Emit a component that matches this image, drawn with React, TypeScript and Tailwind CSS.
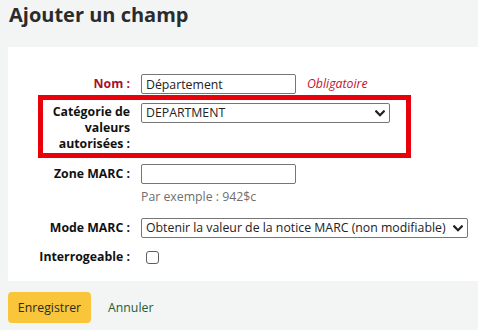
import type { ReactNode } from "react";

function Chevron() {
  return (
    <svg width="10" height="7" viewBox="0 0 10 7" className="pointer-events-none absolute right-[5px] top-[7px]">
      <path d="M1.2 1.4 L5 5.2 L8.8 1.4" fill="none" stroke="#222" strokeWidth="2.2" strokeLinecap="square" />
    </svg>
  );
}

function Row({ label, children, required }: { label: string; children: ReactNode; required?: boolean }) {
  return (
    <div className="flex items-center">
      <label
        className={`w-[122px] shrink-0 text-right font-bold ${required ? "text-[#a8112a]" : "text-[#111]"}`}
      >
        {label}
      </label>
      <div className="ml-[11px] flex items-center">{children}</div>
    </div>
  );
}

export default function App() {
  return (
    <div
      className="h-[330px] w-[478px] overflow-hidden bg-[#f3f4f4] text-[12.3px] leading-4 text-[#111]"
      style={{ fontFamily: '"Open Sans", "Noto Sans", sans-serif' }}
    >
      <h1 className="pl-[9px] pt-[2px] text-[20px] font-bold leading-[26px] text-[#2b2b2b]">Ajouter un champ</h1>

      {/* Form panel */}
      <div className="ml-[8px] mt-[19px] bg-white pb-[16px] pt-[27px]">
        <Row label="Nom :" required>
          <input
            defaultValue="Département"
            className="h-[20px] w-[155px] rounded-[2px] border border-[#767676] px-[4px] text-[12.3px] text-[#222] outline-none"
          />
          <span className="ml-[11px] italic text-[#c41230]">Obligatoire</span>
        </Row>

        {/* Highlighted row */}
        <div className="ml-[30px] mt-[1px] flex h-[63px] w-[373px] items-start border-[5px] border-[#e8000b] py-[3px]">
          <label className="w-[87px] shrink-0 pt-[1px] text-right font-bold text-[#111]">
            Catégorie de valeurs autorisées :
          </label>
          <div className="relative ml-[11px]">
            <select className="h-[20px] w-[249px] appearance-none rounded-[2px] border border-[#767676] bg-white pl-[4px] text-[12.3px] text-[#222] outline-none">
              <option>DEPARTMENT</option>
            </select>
            <Chevron />
          </div>
        </div>

        <div className="mt-[6px]">
          <Row label="Zone MARC :">
            <input className="h-[20px] w-[155px] rounded-[2px] border border-[#767676] px-[4px] text-[12.3px] outline-none" />
          </Row>
          <p className="ml-[133px] mt-[5px] text-[#6f6f6f]">Par exemple : 942$c</p>
        </div>

        <div className="mt-[13px]">
          <Row label="Mode MARC :">
            <div className="relative">
              <select className="h-[20px] w-[327px] appearance-none rounded-[2px] border border-[#767676] bg-white pl-[4px] text-[12.3px] text-[#222] outline-none">
                <option>Obtenir la valeur de la notice MARC (non modifiable)</option>
              </select>
              <Chevron />
            </div>
          </Row>
        </div>

        <div className="mt-[11px] h-[16px]">
          <Row label="Interrogeable :">
            <input
              type="checkbox"
              className="ml-[5px] h-[13px] w-[13px] appearance-none rounded-[3px] border border-[#5f5f5f] bg-white"
            />
          </Row>
        </div>
      </div>

      {/* Actions */}
      <div className="ml-[8px] mt-[11px] flex items-center">
        <button className="h-[31px] w-[83px] rounded-[4px] bg-[#f9c53b] text-[12.3px] text-[#2b2b2b]">Enregistrer</button>
        <a className="ml-[17px] text-[#245c34]">Annuler</a>
      </div>
    </div>
  );
}
